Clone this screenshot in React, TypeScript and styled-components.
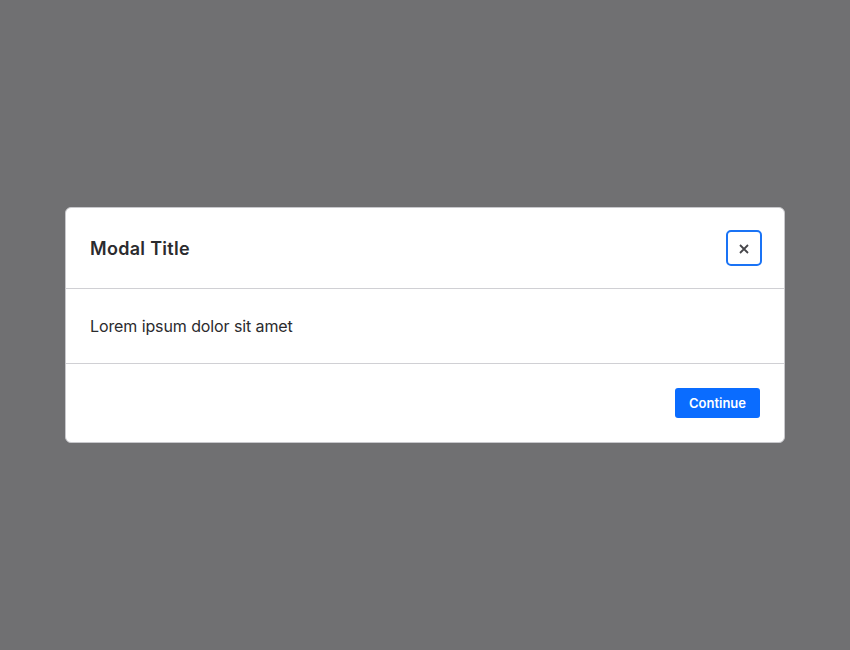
import styled, { createGlobalStyle } from 'styled-components';

const GlobalStyle = createGlobalStyle`
  html, body {
    margin: 0;
    padding: 0;
  }
  body {
    font-family: Inter, "Noto Sans", sans-serif;
    color: #212529;
  }
  * {
    box-sizing: border-box;
  }
`;

const Overlay = styled.div`
  width: 100vw;
  height: 100vh;
  background-color: #707072;
  display: flex;
  align-items: center;
  justify-content: center;
`;

const Modal = styled.div`
  width: 720px;
  background: #ffffff;
  border: 1px solid #c8c8cc;
  border-radius: 6px;
  display: flex;
  flex-direction: column;
`;

const Header = styled.div`
  display: flex;
  align-items: center;
  justify-content: space-between;
  padding: 22px 22px 22px 24px;
  border-bottom: 1px solid #d0d0d4;
`;

const Title = styled.h2`
  margin: 0;
  font-size: 18px;
  font-weight: 600;
  letter-spacing: 0.3px;
  color: #2b2b2e;
`;

const CloseButton = styled.button`
  width: 36px;
  height: 36px;
  display: flex;
  align-items: center;
  justify-content: center;
  background: #ffffff;
  border: 2px solid #1a73f5;
  border-radius: 5px;
  padding: 2px 0 0;
  color: #46464a;
  cursor: pointer;
`;

const Body = styled.div`
  padding: 24px;
  font-size: 16px;
  line-height: 26px;
  letter-spacing: -0.1px;
  color: #2b2b2e;
  border-bottom: 1px solid #d0d0d4;
`;

const Footer = styled.div`
  display: flex;
  justify-content: flex-end;
  padding: 24px;
`;

const PrimaryButton = styled.button`
  height: 30px;
  padding: 0 14px;
  background: #0a6cff;
  color: #ffffff;
  border: none;
  border-radius: 3px;
  font-family: Inter, "Noto Sans", sans-serif;
  font-size: 13px;
  font-weight: 600;
  cursor: pointer;
`;

export default function App() {
  return (
    <>
      <GlobalStyle />
      <Overlay>
        <Modal role="dialog">
          <Header>
            <Title>Modal Title</Title>
            <CloseButton aria-label="Close">
              <svg width="10" height="10" viewBox="0 0 10 10">
                <path d="M1 1L9 9M9 1L1 9" stroke="currentColor" strokeWidth="1.8" />
              </svg>
            </CloseButton>
          </Header>
          <Body>Lorem ipsum dolor sit amet</Body>
          <Footer>
            <PrimaryButton>Continue</PrimaryButton>
          </Footer>
        </Modal>
      </Overlay>
    </>
  );
}
